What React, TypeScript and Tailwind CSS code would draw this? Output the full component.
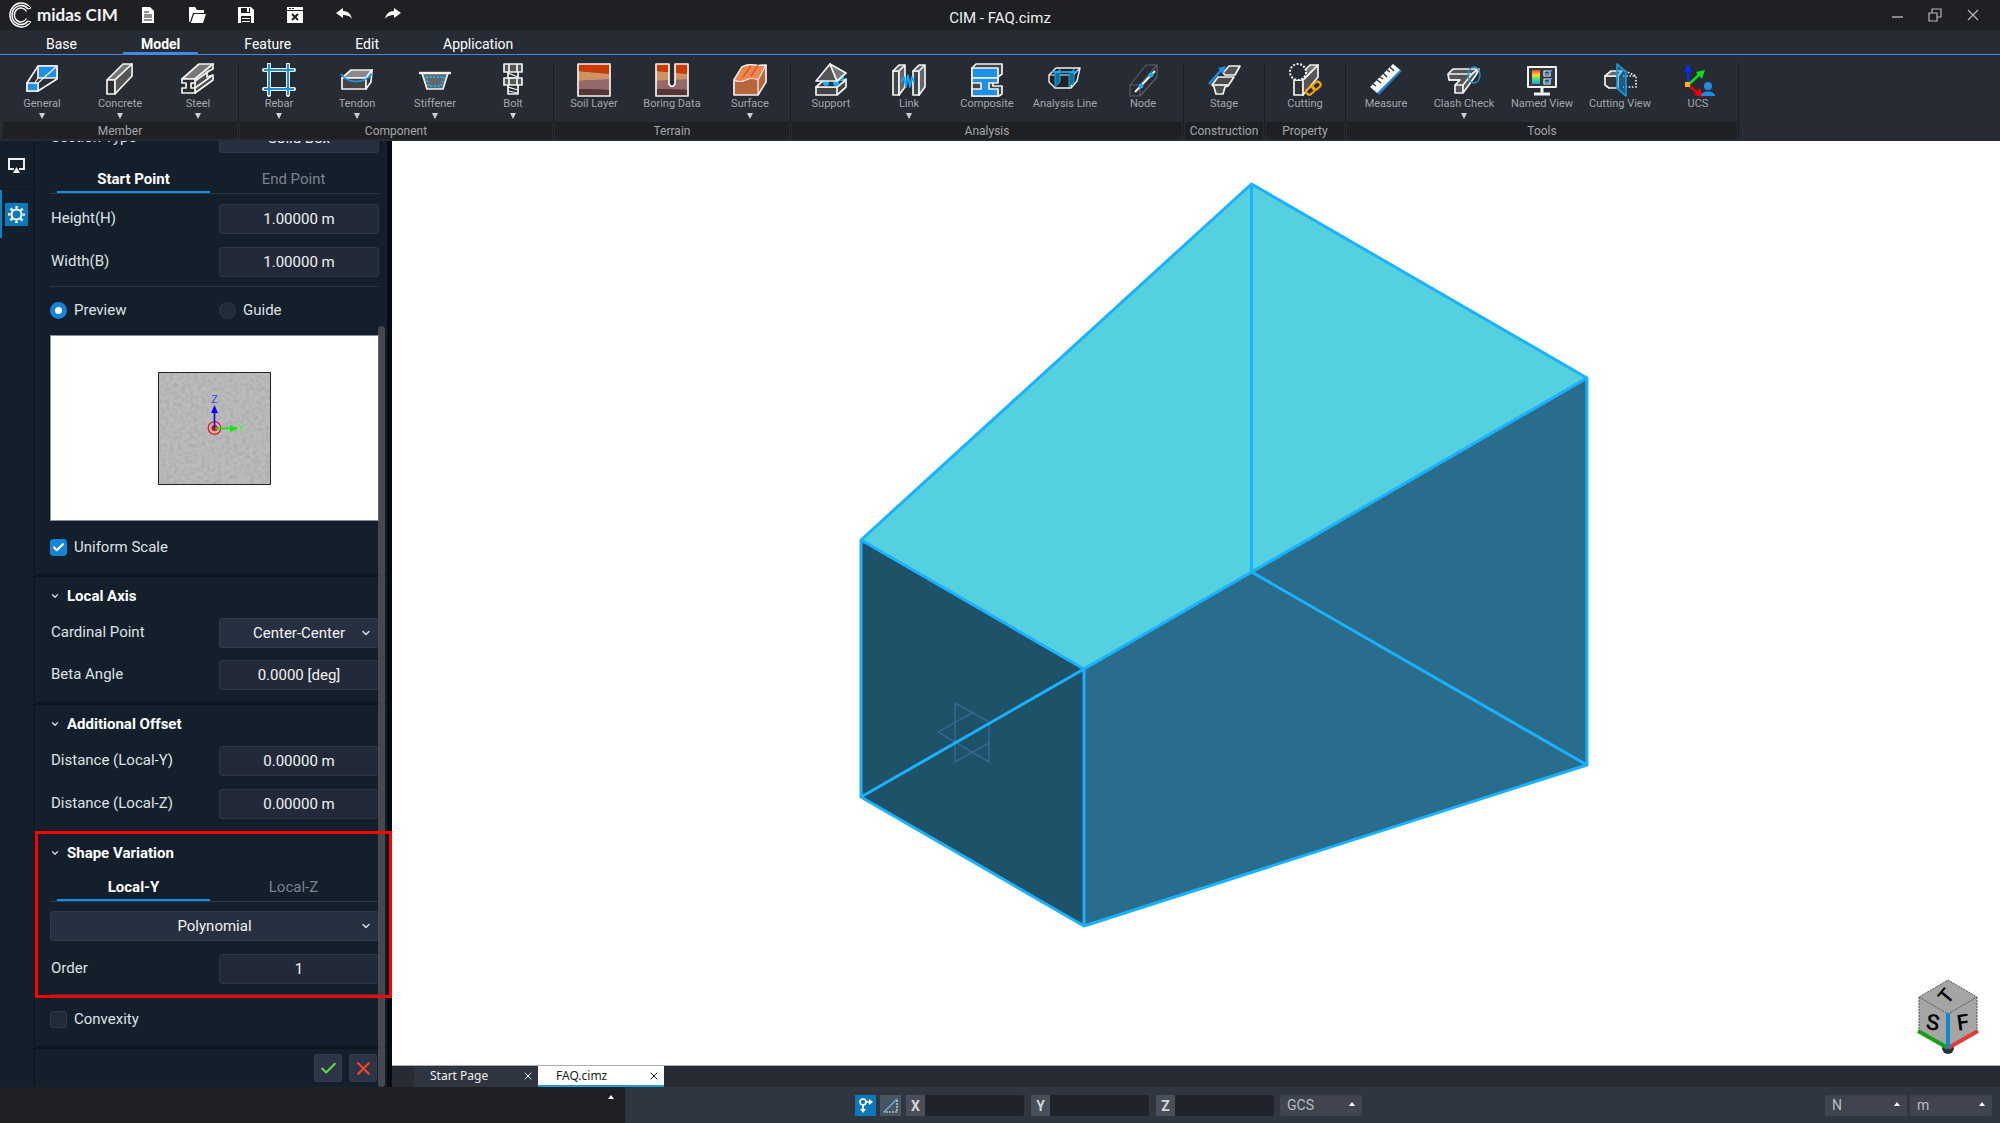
import { useState } from 'react';
import type { ReactNode } from 'react';
import { Check, ChevronDown, X } from 'lucide-react';

interface Tool {
  label: string;
  icon: ReactNode;
  menu?: boolean;
}

interface ToolGroup {
  name: string;
  tools: Tool[];
}

const MENU_TABS = ['Base', 'Model', 'Feature', 'Edit', 'Application'];

function Icon({ children }: { children: ReactNode }) {
  return (
    <svg width="34" height="34" viewBox="0 0 34 34" fill="none" stroke="#f2f2f2" strokeWidth="1.7" strokeLinejoin="round" aria-hidden="true">
      {children}
    </svg>
  );
}

const GeneralIcon = (
  <Icon>
    <path d="M2 20 13 3h19v13L13 28H2z" fill="#2b2e34" />
    <path d="M13 3h19v12H13z" fill="#1f8fe6" />
    <path d="M2 20h11v8H2z" fill="#1f8fe6" />
    <path d="M13 20 32 3M13 15l-4 6" strokeWidth="1.2" />
  </Icon>
);

const ConcreteIcon = (
  <Icon>
    <path d="M4 17 20 1h9L12 17z" fill="#777" />
    <path d="M4 17h8v14H4z" fill="#2c2c2c" />
    <path d="M12 17 29 1v12L12 31z" fill="#555" />
  </Icon>
);

const SteelIcon = (
  <Icon>
    <path d="M1 16 18 1h14L14 16z" fill="#777" />
    <path d="M14 16 32 1v5l-6 3v5l6-2v5L14 30z" fill="#4b4b4b" />
    <path d="m10 21 18-13M14 25l18-13" />
    <path d="M1 16h13v4h-4v5h4v5H1v-5h4v-5H1z" fill="#2c2c2c" />
  </Icon>
);

const RebarIcon = (
  <Icon>
    <path d="M7 1v31M26 1v31M2 7h30M2 26h30" strokeWidth="4" strokeLinecap="round" />
    <path d="M7 1v31M26 1v31M2 7h30M2 26h30" stroke="#1f8fe6" strokeWidth="2" />
  </Icon>
);

const TendonIcon = (
  <Icon>
    <path d="m2 15 9-8h21l-6 8z" fill="#8a8a8a" />
    <path d="M2 15h24v11H2z" fill="#444" />
    <path d="m32 7-1 12-5 7V15z" fill="#333" />
    <path d="M1 11c7 10 23 10 31 0" stroke="#12a5ea" />
  </Icon>
);

const StiffenerIcon = (
  <Icon>
    <path d="m4 10 5 16h16l5-16z" fill="#666" />
    <path d="M1 10h32" strokeWidth="2.4" />
    <path d="m8 14 3 9h12l3-9z" stroke="#10b4ff" strokeWidth="2" strokeDasharray="2 1.6" />
  </Icon>
);

const BoltIcon = (
  <Icon>
    <path d="M8 1h18v8H8zM8 15h18v7H8z" fill="#555" />
    <path d="M13 1v8M21 1v8M13 15v7M21 15v7M12 9v6h10V9M12 22v9h10v-9" />
    <path d="m12 10 10 4M12 24l10 3M12 28l10 2" strokeWidth="1.2" />
  </Icon>
);

function SoilLayers() {
  return (
    <g stroke="none">
      <path d="M1 1h32v10L1 8z" fill="#cc3a00" />
      <path d="M1 8l32 3v6L1 18z" fill="#cf9264" />
      <path d="M1 18l32-2v11L1 26z" fill="#95696a" />
      <path d="M1 26l32 1v6H1z" fill="#553534" />
    </g>
  );
}

const SoilLayerIcon = (
  <Icon>
    <SoilLayers />
    <path d="M1 1h32v32H1z" />
  </Icon>
);

const BoringIcon = (
  <Icon>
    <SoilLayers />
    <path d="M14 0v20q3 5 6 0V0z" fill="#272b34" stroke="none" />
    <path d="M1 1h13v20q3 5 6 0V1h13v32H1z" />
  </Icon>
);

const SurfaceIcon = (
  <Icon>
    <path d="M1 17 9 4q6-3 11-2t13 0v17l-8 13H1z" fill="#b9653b" />
    <path d="M1 17 9 4q6-3 11-2t13 0l-8 15q-6-3-12 0t-12 0" fill="#ee8450" strokeWidth="1.2" />
    <path d="M25 17v15" strokeWidth="1.2" />
    <path d="m10 14 8-11M18 13l7-11" stroke="#d4602f" />
  </Icon>
);

const SupportIcon = (
  <Icon>
    <path d="M2 24h21v8H2zM23 24l9-8v8l-9 8z" fill="#444" />
    <path d="m2 24 8-7h22l-9 7z" fill="#333" />
    <circle cx="12" cy="20" r="3" fill="#12b0ff" stroke="none" />
    <circle cx="22" cy="20" r="3" fill="#12b0ff" stroke="none" />
    <circle cx="27" cy="15" r="3" fill="#12b0ff" stroke="none" />
    <path d="M16 1 2 18h21z" fill="#555" />
    <path d="m16 1 16 9-9 8z" fill="#777" />
  </Icon>
);

const LinkIcon = (
  <Icon>
    <path d="M1 8h6v24H1z" fill="#444" />
    <path d="m1 8 6-6h6L7 8zM7 8l6-6v22l-6 8z" fill="#666" />
    <path d="M21 8h6v24h-6z" fill="#444" />
    <path d="m21 8 6-6h6l-6 6zM27 8l6-6v22l-6 8z" fill="#666" />
    <path d="m9 19 3-5 2 10 2-12 2 12 2-10 2 5" stroke="#12a5ff" />
  </Icon>
);

const CompositeIcon = (
  <Icon>
    <path d="m2 5 4-4h26v10l-4 3v3h-5v6h9v8l-3 2H2z" fill="#444" />
    <path d="M2 5h26v10H2z" fill="#1f8fe6" />
    <path d="M2 15h26v5h-9v6h9v7H2v-7h9v-6H2z" fill="#1f8fe6" />
  </Icon>
);

const AnalysisLineIcon = (
  <Icon>
    <path d="m1 12 7-7h24l-3 13-6 7H7l-6-6z" fill="#222" strokeWidth="1.4" />
    <path d="M1 12h24l7-7M25 12l-2 13" strokeWidth="1.2" />
    <path d="M7 11v13l5-5V6zM21 11v13l5-5V6z" fill="#0f6f9f" stroke="#10a5e8" strokeWidth="1" />
    <path d="M4 9h25" stroke="#10b4ff" />
  </Icon>
);

const NodeIcon = (
  <Icon>
    <path d="m4 22 16-20h11v12L14 33H4z" stroke="#5b5e64" strokeWidth="1.2" />
    <path d="M4 22h10v11M14 22 31 2" stroke="#5b5e64" strokeWidth="1.2" />
    <path d="M9 29 29 8" strokeWidth="2" />
    <circle cx="15" cy="23" r="2.4" fill="#12b0ff" stroke="none" />
    <circle cx="25" cy="12" r="2.4" fill="#12b0ff" stroke="none" />
  </Icon>
);

const StageIcon = (
  <Icon>
    <path d="m5 22 6-8h16l-6 9-3 1-2 7H9L7 24z" fill="#4b4b4b" />
    <path d="m16 10 6-7h11l-5 9H18z" fill="#555" />
    <path d="M5 22h16" />
    <path d="M2 21 16 5" stroke="#1f8fe6" strokeWidth="2.2" />
    <path d="m11 5 8-2-3 8z" fill="#1f8fe6" stroke="none" />
  </Icon>
);

const CuttingIcon = (
  <Icon>
    <path d="M6 17h9v15H6z" fill="#333" />
    <path d="m15 17 15-15v12L15 32z" fill="#555" />
    <path d="M6 17 22 2h8L15 17z" fill="#777" />
    <circle cx="10" cy="9" r="8" fill="#272b34" strokeWidth="2" strokeDasharray="2 1.6" />
    <g stroke="#f0a30a" strokeWidth="2.2">
      <rect x="18" y="25" width="9" height="6" rx="3" transform="rotate(-40 22 28)" />
      <rect x="24" y="20" width="9" height="6" rx="3" transform="rotate(-40 28 23)" />
    </g>
  </Icon>
);

const MeasureIcon = (
  <Icon>
    <path d="M24 1 33 8 10 32 8 30z" fill="#1f7fd0" stroke="none" />
    <path d="m24 1 7 6L8 30l-7-6z" fill="#f5f5f5" stroke="none" />
    <path d="m4 21 3 2M8 17l4 3M11 14l3 2M14 10l4 4M18 7l3 2M21 4l4 4" stroke="#272b34" strokeWidth="1.2" />
  </Icon>
);

const ClashIcon = (
  <Icon>
    <path d="M1 11 6 6h26l-3 6-13 18H8v-8l5-5H2z" fill="#555" />
    <path d="M1 11h24l6-5M2 17h11M8 22h8v8M16 22l9-11" />
    <ellipse cx="27" cy="12" rx="6" ry="8" stroke="#1897d6" strokeWidth="1.3" />
  </Icon>
);

const NamedViewIcon = (
  <Icon>
    <defs>
      <linearGradient id="legend" x1="0" y1="0" x2="0" y2="1">
        <stop offset="0" stopColor="#ff3b30" />
        <stop offset=".35" stopColor="#ffd93b" />
        <stop offset=".65" stopColor="#4be06b" />
        <stop offset="1" stopColor="#2196f3" />
      </linearGradient>
    </defs>
    <path d="M3 4h28v20H3z" fill="#33373e" strokeWidth="2" />
    <path d="M7 7h8v14H7z" fill="url(#legend)" stroke="none" />
    <path d="M19 8h6v5h-6zM19 16h6v5h-6z" strokeWidth="1.2" />
    <path d="m20 10 2 2 5-5M20 18l2 2 5-5" stroke="#35b4ff" strokeWidth="1.2" />
    <path d="M17 24v6M9 31h16" strokeWidth="3" />
  </Icon>
);

const CuttingViewIcon = (
  <Icon>
    <path d="M2 13h13v12H6l-4-3z" fill="#333" />
    <path d="m2 13 6-5h11l-4 5z" fill="#666" />
    <path d="m22 8 11 5v11H20M20 13h13" strokeDasharray="1.6 1.6" />
    <path d="m14 1 9 8v24l-9-8z" fill="#1897d6" fillOpacity=".45" stroke="#1897d6" />
  </Icon>
);

const UcsIcon = (
  <Icon>
    <g strokeWidth="2.4">
      <path d="M7 22V7" stroke="#0b2cff" />
      <path d="M7 22 20 10" stroke="#00e516" />
      <path d="m7 22 11 9" stroke="#f00000" />
    </g>
    <path d="m3 9 4-8 4 8z" fill="#0b2cff" stroke="none" />
    <path d="m15 9 9-2-3 9z" fill="#00e516" stroke="none" />
    <path d="m13 32 9 2-3-9z" fill="#f00000" stroke="none" />
    <path d="M4 19h5v5H4z" fill="#f7b500" stroke="none" />
    <circle cx="27" cy="23" r="4" fill="#1f8fe6" stroke="none" />
    <path d="M20 33c0-6 14-6 14 0z" fill="#1f8fe6" stroke="none" />
  </Icon>
);

const TOOL_GROUPS: ToolGroup[] = [
  {
    name: 'Member',
    tools: [
      { label: 'General', icon: GeneralIcon, menu: true },
      { label: 'Concrete', icon: ConcreteIcon, menu: true },
      { label: 'Steel', icon: SteelIcon, menu: true },
    ],
  },
  {
    name: 'Component',
    tools: [
      { label: 'Rebar', icon: RebarIcon, menu: true },
      { label: 'Tendon', icon: TendonIcon, menu: true },
      { label: 'Stiffener', icon: StiffenerIcon, menu: true },
      { label: 'Bolt', icon: BoltIcon, menu: true },
    ],
  },
  {
    name: 'Terrain',
    tools: [
      { label: 'Soil Layer', icon: SoilLayerIcon },
      { label: 'Boring Data', icon: BoringIcon },
      { label: 'Surface', icon: SurfaceIcon, menu: true },
    ],
  },
  {
    name: 'Analysis',
    tools: [
      { label: 'Support', icon: SupportIcon },
      { label: 'Link', icon: LinkIcon, menu: true },
      { label: 'Composite', icon: CompositeIcon },
      { label: 'Analysis Line', icon: AnalysisLineIcon },
      { label: 'Node', icon: NodeIcon },
    ],
  },
  { name: 'Construction', tools: [{ label: 'Stage', icon: StageIcon }] },
  { name: 'Property', tools: [{ label: 'Cutting', icon: CuttingIcon }] },
  {
    name: 'Tools',
    tools: [
      { label: 'Measure', icon: MeasureIcon },
      { label: 'Clash Check', icon: ClashIcon, menu: true },
      { label: 'Named View', icon: NamedViewIcon },
      { label: 'Cutting View', icon: CuttingViewIcon },
      { label: 'UCS', icon: UcsIcon },
    ],
  },
];

const QUICK_ACTIONS: { label: string; icon: ReactNode }[] = [
  {
    label: 'New',
    icon: (
      <>
        <path d="M3 1h8l4 4v12H3z" fill="#fff" />
        <path d="M5 6h5M5 9h8M5 11h8M5 14h8" stroke="#1f2024" strokeWidth="1.2" />
      </>
    ),
  },
  {
    label: 'Open',
    icon: (
      <>
        <path d="M1 1h6l2 3h7v3H5L2 16H1z" fill="#fff" />
        <path d="M6 8h12l-3 9H3z" fill="#fff" />
      </>
    ),
  },
  {
    label: 'Save',
    icon: (
      <>
        <path d="M1 1h13l3 3v13H1z" fill="#fff" />
        <path d="M4 2h9v5H4zM4 10h10v7H4z" fill="#1f2024" />
        <path d="M10 2h2v4h-2zM5 12h8v1H5zM5 15h8v1H5z" fill="#fff" />
      </>
    ),
  },
  {
    label: 'Close',
    icon: (
      <>
        <path d="M1 1h16v3H1zM1 5h16v12H1z" fill="#fff" />
        <path d="M3 2h2v1H3zM6 2h2v1H6z" fill="#1f2024" />
        <path d="m6 8 6 6M12 8l-6 6" stroke="#1f2024" strokeWidth="2" />
      </>
    ),
  },
  { label: 'Undo', icon: <path d="m1 7 7-5v3c6 0 8 4 9 8-2-3-5-4-9-4v3z" fill="#fff" /> },
  { label: 'Redo', icon: <path d="m17 7-7-5v3c-6 0-8 4-9 8 2-3 5-4 9-4v3z" fill="#fff" /> },
];

function TitleBar() {
  return (
    <header className="grid h-[30px] shrink-0 grid-cols-[1fr_auto_1fr] items-center bg-[#1f2024]">
      <div className="flex items-center pl-2">
        <svg width="25" height="26" viewBox="0 0 25 26" fill="none" stroke="#fff" strokeWidth="1.4" aria-hidden="true">
          <path d="M21 4a11.500 12 0 1 0 0 18" />
          <path d="M20 7a9 9.500 0 1 0 0 12" />
          <path d="M18.500 9.500a6.500 7 0 1 0 0 7" />
          <path d="m21 4 2 2-3 1M21 22l2-2-3-1" strokeWidth="1" />
        </svg>
        <span className="ml-1 w-[81px] whitespace-nowrap font-['Lato'] text-[17px] font-bold leading-6 text-[#f4f4f4]">midas CIM</span>
        <div className="ml-[21px] flex gap-[31px]">
          {QUICK_ACTIONS.map((action) => (
            <button key={action.label} type="button" aria-label={action.label}>
              <svg width="18" height="18" viewBox="0 0 18 18" fill="none" aria-hidden="true">
                {action.icon}
              </svg>
            </button>
          ))}
        </div>
      </div>
      <h1 className="pt-[5px] text-[15px] leading-5 text-[#f0f0f0]">CIM - FAQ.cimz</h1>
      <div className="flex items-center justify-end gap-6 pr-5 text-[#b4b6ba]">
        <button type="button" aria-label="Minimize">
          <svg width="14" height="14" viewBox="0 0 14 14" stroke="currentColor" strokeWidth="1.4"><path d="M2 9h11" /></svg>
        </button>
        <button type="button" aria-label="Restore">
          <svg width="14" height="14" viewBox="0 0 14 14" fill="none" stroke="currentColor" strokeWidth="1.2"><path d="M1 5h8v8H1zM4 5V1h9v8H9" /></svg>
        </button>
        <button type="button" aria-label="Close window">
          <svg width="14" height="14" viewBox="0 0 14 14" stroke="currentColor" strokeWidth="1.2"><path d="m2 2 10 10M12 2 2 12" /></svg>
        </button>
      </div>
    </header>
  );
}

function Ribbon() {
  const [activeTab, setActiveTab] = useState('Model');

  return (
    <div className="shrink-0 bg-[#272b34]">
      <nav className="flex h-[25px] gap-7 border-b border-[#3a8bec] pl-7">
        {MENU_TABS.map((tab) => (
          <button
            key={tab}
            type="button"
            onClick={() => setActiveTab(tab)}
            className={`border-b-2 px-[18px] pt-1 text-sm leading-5 text-white ${
              tab === activeTab ? 'border-[#3a8bec] font-bold' : 'border-transparent'
            }`}
          >
            {tab}
          </button>
        ))}
      </nav>
      <div className="flex h-[86px] pl-[3px]">
        {TOOL_GROUPS.map((group) => (
          <section key={group.name} className="flex">
            <div className="flex flex-col">
              <div className="flex h-[67px]">
                {group.tools.map((tool) => (
                  <button key={tool.label} type="button" className="flex w-[78px] flex-col items-center pt-2 text-[#a3a6ac]">
                    {tool.icon}
                    <span className="whitespace-nowrap text-[11px] leading-[14px]">{tool.label}</span>
                    {tool.menu && (
                      <svg width="6" height="6" viewBox="0 0 6 6" className="mt-0.5" fill="#d0d0d0" aria-hidden="true">
                        <path d="M0 0h6L3 6z" />
                      </svg>
                    )}
                  </button>
                ))}
              </div>
              <h2 className="h-[17px] bg-[#1f2024] text-center text-xs leading-[18px] text-[#a3a6ac]">{group.name}</h2>
            </div>
            <div className="mx-px mt-2 mb-1 w-px bg-[#1b1d22]" />
          </section>
        ))}
      </div>
    </div>
  );
}

function Tabs({ tabs }: { tabs: string[] }) {
  const [active, setActive] = useState(tabs[0]);
  return (
    <div className="grid h-8 grid-cols-[153px_1fr] border-b border-[#2b3848] pr-0.5 pl-[7px]" role="tablist">
      {tabs.map((tab) => (
        <button
          key={tab}
          type="button"
          role="tab"
          aria-selected={tab === active}
          onClick={() => setActive(tab)}
          className={`border-b-2 pt-1 text-[15px] leading-5 ${
            tab === active ? 'border-[#1190f0] font-bold text-white' : 'border-transparent text-[#7b838c]'
          }`}
        >
          {tab}
        </button>
      ))}
    </div>
  );
}

function Field({ id, label, value }: { id: string; label: string; value: string }) {
  return (
    <div className="flex h-[30px] justify-between">
      <label htmlFor={id} className="pl-px text-[15px] leading-7 text-[#dfe2e5]">{label}</label>
      <input
        id={id}
        defaultValue={value}
        className="h-[30px] w-40 rounded-[3px] border border-[#2c3748] bg-[#222a39] text-center text-[15px] text-[#f2f2f2]"
      />
    </div>
  );
}

function SelectBox({ id, value, options, className }: { id: string; value: string; options: string[]; className: string }) {
  return (
    <div className={`relative ${className}`}>
      <select
        id={id}
        defaultValue={value}
        aria-label={value}
        className="h-[30px] w-full appearance-none rounded-[3px] border border-[#2f3a4a] bg-[#273040] text-center text-[15px] text-[#f2f2f2] [text-align-last:center]"
      >
        {options.map((option) => (
          <option key={option}>{option}</option>
        ))}
      </select>
      <ChevronDown size={12} strokeWidth={3} className="pointer-events-none absolute top-[9px] right-[7px] text-[#d5d8dc]" />
    </div>
  );
}

function RadioOption({ label, checked, onChange }: { label: string; checked: boolean; onChange: () => void }) {
  return (
    <label className="flex items-center gap-[7px] text-[15px] leading-[18px] text-[#dfe2e5]">
      <input
        type="radio"
        name="section-view"
        checked={checked}
        onChange={onChange}
        className="size-[17px] appearance-none rounded-full border border-[#2f3949] bg-[#222b39] checked:border-[5px] checked:border-[#1583d8] checked:bg-white"
      />
      {label}
    </label>
  );
}

function CheckOption({ label, defaultChecked }: { label: string; defaultChecked?: boolean }) {
  return (
    <label className="relative flex w-fit items-center gap-[7px] text-[15px] leading-[18px] text-[#dfe2e5]">
      <input
        type="checkbox"
        defaultChecked={defaultChecked}
        className="peer size-[17px] appearance-none rounded-[3px] border border-[#2f3949] bg-[#222b39] checked:border-[#1583d8] checked:bg-[#1583d8]"
      />
      <Check size={13} strokeWidth={4} className="pointer-events-none absolute left-[2px] hidden text-white peer-checked:block" />
      {label}
    </label>
  );
}

function SectionHeader({ title }: { title: string }) {
  return (
    <button type="button" className="mt-[9px] flex h-5 items-center gap-[7px] text-[15px] font-bold leading-5 text-white">
      <ChevronDown size={10} strokeWidth={3} className="text-[#d5d8dc]" />
      {title}
    </button>
  );
}

function Divider() {
  return <div className="-mr-[13px] -ml-[15px] h-[3px] shrink-0 bg-[#0c141e]" />;
}

function SectionPreview() {
  return (
    <div className="mt-4 flex h-[186px] shrink-0 items-center justify-center border border-[#8b8f94] bg-white">
      <svg width="113" height="113" viewBox="0 0 113 113" aria-hidden="true">
        <filter id="grain">
          <feTurbulence type="fractalNoise" baseFrequency=".25" numOctaves="3" seed="4" />
          <feColorMatrix values="0 0 0 0 .3  0 0 0 0 .3  0 0 0 0 .3  .9 0 0 0 -.32" />
        </filter>
        <path d="M0 0h113v113H0z" fill="#bcbcbc" />
        <path d="M0 0h113v113H0z" filter="url(#grain)" />
        <path d="M.5.5h112v112H.5z" fill="none" stroke="#222" />
        <circle cx="56.500" cy="56" r="6.300" fill="none" stroke="#f01818" strokeWidth="1.2" />
        <circle cx="56.500" cy="56" r="3" fill="#f00000" />
        <path d="M56.500 56V38" stroke="#0a0af0" strokeWidth="1.6" />
        <path d="m53 41 3.500-8 3.500 8z" fill="#0a0af0" />
        <path d="M57 56.500h18" stroke="#0bea0b" strokeWidth="1.6" />
        <path d="m72 53 8 3.500-8 3.500z" fill="#0bea0b" />
        <text x="56.500" y="31" textAnchor="middle" fontSize="11" fill="#3a3af5">Z</text>
        <text x="80" y="60" fontSize="10" fill="#3cf03c">Y</text>
      </svg>
    </div>
  );
}

function PropertiesPanel() {
  const [view, setView] = useState<'preview' | 'guide'>('preview');

  return (
    <aside className="relative flex w-[392px] shrink-0 bg-[#141f2c]">
      <div className="flex w-[35px] flex-col border-r-2 border-[#0f1823]">
        <button type="button" aria-label="Display" className="flex h-[49px] items-center justify-center border-b border-[#101923]">
          <svg width="17" height="16" viewBox="0 0 17 16" fill="none" aria-hidden="true">
            <path d="M6 12H1V2h15v10h-5" stroke="#eee" strokeWidth="2" />
            <path d="m5 16 3.500-6 3.500 6z" fill="#eee" />
          </svg>
        </button>
        <button type="button" aria-label="Properties" className="flex h-12 items-center border-l-2 border-[#0c84c6] pl-[3px]">
          <span className="flex size-[23px] items-center justify-center bg-[#0c7ab8]">
            <svg width="19" height="19" viewBox="0 0 19 19" fill="none" stroke="#fff" aria-hidden="true">
              <circle cx="9.500" cy="9.500" r="5" strokeWidth="2" />
              <circle cx="9.500" cy="9.500" r="7.200" strokeWidth="2.600" strokeDasharray="2.400 3.250" strokeDashoffset="1.200" />
            </svg>
          </span>
        </button>
      </div>

      {/* content is kept scrolled to the bottom */}
      <div className="flex min-w-0 flex-1 flex-col justify-end overflow-hidden pr-[13px] pl-[15px]">
        <div className="flex h-[30px] shrink-0 justify-between">
          <label htmlFor="section-type" className="pl-px text-[15px] leading-7 text-[#dfe2e5]">Section Type</label>
          <button id="section-type" type="button" className="h-[30px] w-40 rounded-[3px] border border-[#2f3a4a] bg-[#273040] text-[15px] text-[#f2f2f2]">
            Solid Box
          </button>
        </div>
        <div className="mt-[9px]">
          <Tabs tabs={['Start Point', 'End Point']} />
        </div>
        <div className="mt-[10px] flex flex-col gap-[13px]">
          <Field id="height" label="Height(H)" value="1.00000 m" />
          <Field id="width" label="Width(B)" value="1.00000 m" />
        </div>
        <div className="mt-[9px] h-px shrink-0 bg-[#2b3644]" />
        <div className="mt-[14px] grid h-[18px] shrink-0 grid-cols-[169px_1fr]">
          <RadioOption label="Preview" checked={view === 'preview'} onChange={() => setView('preview')} />
          <RadioOption label="Guide" checked={view === 'guide'} onChange={() => setView('guide')} />
        </div>
        <SectionPreview />
        <div className="mt-[17px] mb-[19px] h-[17px] shrink-0">
          <CheckOption label="Uniform Scale" defaultChecked />
        </div>

        <Divider />
        <SectionHeader title="Local Axis" />
        <div className="mt-3 mb-3 flex flex-col gap-3">
          <div className="flex h-[30px] justify-between">
            <label htmlFor="cardinal" className="pl-px text-[15px] leading-7 text-[#dfe2e5]">Cardinal Point</label>
            <SelectBox id="cardinal" value="Center-Center" options={['Center-Center', 'Top-Left', 'Bottom-Right']} className="w-40" />
          </div>
          <Field id="beta" label="Beta Angle" value="0.0000 [deg]" />
        </div>

        <Divider />
        <SectionHeader title="Additional Offset" />
        <div className="mt-3 mb-3 flex flex-col gap-[13px]">
          <Field id="offset-y" label="Distance (Local-Y)" value="0.00000 m" />
          <Field id="offset-z" label="Distance (Local-Z)" value="0.00000 m" />
        </div>

        <Divider />
        <SectionHeader title="Shape Variation" />
        <div className="mt-[7px]">
          <Tabs tabs={['Local-Y', 'Local-Z']} />
        </div>
        <div className="mt-[9px] mb-[10px] flex flex-col gap-[13px]">
          <SelectBox id="variation" value="Polynomial" options={['Polynomial', 'Linear']} className="w-full" />
          <Field id="order" label="Order" value="1" />
        </div>
        <div className="h-px shrink-0 bg-[#2b3644]" />
        <div className="mt-[15px] mb-[18px] h-[18px] shrink-0">
          <CheckOption label="Convexity" />
        </div>

        <Divider />
        <div className="flex h-[38px] shrink-0 items-center justify-end gap-[7px] pr-[2px]">
          <button type="button" aria-label="Apply" className="flex size-7 items-center justify-center rounded-[3px] border border-[#323e50] bg-[#2b3546]">
            <Check size={19} strokeWidth={2.5} className="text-[#5fdc3f]" />
          </button>
          <button type="button" aria-label="Cancel" className="flex size-7 items-center justify-center rounded-[3px] border border-[#323e50] bg-[#2b3546]">
            <X size={21} strokeWidth={2.5} className="text-[#f8432a]" />
          </button>
        </div>
      </div>

      <div className="pointer-events-none absolute top-[185px] right-[7px] bottom-0 w-[7px] rounded bg-[#55575b]/75" />
      <div className="pointer-events-none absolute inset-y-0 right-0 w-[5px] bg-[#070c14]" />
      <div className="pointer-events-none absolute right-0 bottom-[89px] left-[35px] h-[167px] border-3 border-[#ff0000]" />
    </aside>
  );
}

function ModelView() {
  return (
    <div className="relative min-h-0 flex-1 border-b border-[#a9adb2] bg-white">
      <svg viewBox="0 0 1608 924" className="size-full" fill="none" role="img" aria-label="Tapered solid box">
        <path d="M859.500 43 1195 237 692 528 469 399z" fill="#55d0de" />
        <path d="m692 528 503-291v387L692 785z" fill="#2a6c8c" />
        <path d="m469 399 223 129v257L469 656z" fill="#1d5268" />
        <path d="m563 562 34 19v40l-51-30 34-19M563 562v59l34-19" stroke="#38689a" strokeWidth="1.600" opacity=".85" />
        <circle cx="579" cy="592" r="2" fill="#3b2636" />
        <g stroke="#1ab2ff" strokeWidth="3" strokeLinejoin="round">
          <path d="M859.500 43 1195 237v387L692 785 469 656V399z" />
          <path d="m469 399 223 129v257M469 656l223-128 503-291" />
          <path d="M859.500 43v388l335.500 193" />
        </g>
      </svg>
      <svg width="64" height="78" viewBox="0 0 64 78" className="absolute right-[20px] bottom-[11px]" role="img" aria-label="View cube">
        <circle cx="32" cy="72" r="6" fill="#263040" />
        <path d="m32 4 29 17v34L32 72 3 55V21z" fill="#a5a5a5" />
        <path d="m3 21 29 17 29-17L32 4zM3 21v34M61 21v34" fill="none" stroke="#555" strokeDasharray="2 1" />
        <path d="m2 55 30 17" stroke="#16a016" strokeWidth="4" />
        <path d="m62 55-30 17" stroke="#e03a3a" strokeWidth="4" />
        <path d="M32 37v35" stroke="#0d8bc8" strokeWidth="4" />
        <g fontSize="22" fontWeight="500" textAnchor="middle">
          <text transform="translate(17 46) rotate(8)" y="8">S</text>
          <text transform="translate(47 46) rotate(-8)" y="8">F</text>
          <text transform="translate(30 20) rotate(-50)" fontSize="20" y="7">T</text>
        </g>
      </svg>
    </div>
  );
}

function DocumentTabs() {
  return (
    <div className="flex h-[21px] shrink-0 bg-[#272b34] pl-[22px] font-['Noto_Sans'] text-xs leading-5">
      <div className="flex w-[124px] items-start justify-between bg-[#2f3540] pr-1 pl-4 text-[#f0f0f0]">
        <button type="button">Start Page</button>
        <button type="button" aria-label="Close Start Page" className="pt-1"><X size={12} /></button>
      </div>
      <div className="flex w-[126px] items-start justify-between border-b-2 border-[#2499d8] bg-white pr-1 pl-[18px] text-[#1c1c1c]">
        <button type="button">FAQ.cimz</button>
        <button type="button" aria-label="Close FAQ.cimz" className="pt-1"><X size={12} /></button>
      </div>
    </div>
  );
}

function UnitSelect({ label, value }: { label: string; value: string }) {
  return (
    <div className="relative">
      <select aria-label={label} defaultValue={value} className="h-[21px] w-[82px] appearance-none rounded-[2px] bg-[#40444f] pl-[7px] text-sm leading-5 text-[#b9bdc5]">
        <option>{value}</option>
      </select>
      <svg width="6" height="4" viewBox="0 0 6 4" fill="#fff" className="pointer-events-none absolute top-[9px] right-[7px]" aria-hidden="true">
        <path d="M0 4h6L3 0z" />
      </svg>
    </div>
  );
}

function StatusBar() {
  return (
    <footer className="flex h-9 shrink-0 bg-[#30363f]">
      <div className="flex w-[625px] justify-end bg-[#1f2024] pt-2 pr-[11px]">
        <svg width="6" height="4" viewBox="0 0 6 4" fill="#fff" aria-hidden="true"><path d="M0 4h6L3 0z" /></svg>
      </div>
      <div className="flex flex-1 items-center pr-2 pl-[230px]">
        <button type="button" aria-label="Snap" className="flex size-[21px] items-center justify-center bg-[#0c7ab8]">
          <svg width="17" height="17" viewBox="0 0 17 17" fill="none" stroke="#fff" strokeWidth="1.700" aria-hidden="true">
            <circle cx="6" cy="5" r="3" />
            <path d="M9 5h5M6 8v6" />
            <path d="m12 2 4 3-4 3zM3 12l3 4 3-4z" fill="#fff" stroke="none" />
          </svg>
        </button>
        <button type="button" aria-label="Angle" className="mr-[5px] ml-1 flex size-[21px] items-center justify-center bg-[#465660]">
          <svg width="17" height="17" viewBox="0 0 17 17" fill="none" aria-hidden="true">
            <path d="M2 15 15 2" stroke="#6f9fe0" strokeWidth="1.600" />
            <path d="M15 3v12H2" stroke="#e5e5e5" strokeWidth="1.200" strokeDasharray="2 1" />
          </svg>
        </button>
        <div className="mr-[6px] flex gap-[7px]">
          {['X', 'Y', 'Z'].map((axis) => (
            <div key={axis} className="flex h-[21px] w-[118px]">
              <label htmlFor={`axis-${axis}`} className="w-[19px] bg-[#4a4e59] text-center text-sm font-bold leading-[22px] text-[#d4d6da]">{axis}</label>
              <input id={`axis-${axis}`} className="min-w-0 flex-1 rounded-r-[2px] bg-[#1f232b] px-1 text-sm text-white" />
            </div>
          ))}
        </div>
        <UnitSelect label="Coordinate system" value="GCS" />
        <div className="ml-auto flex gap-[3px]">
          <UnitSelect label="Force unit" value="N" />
          <UnitSelect label="Length unit" value="m" />
        </div>
      </div>
    </footer>
  );
}

export default function App() {
  return (
    <div className="flex h-screen flex-col overflow-hidden bg-[#272b34] font-['Roboto','Liberation_Sans',sans-serif]">
      <TitleBar />
      <Ribbon />
      <div className="flex min-h-0 flex-1">
        <PropertiesPanel />
        <main className="flex min-w-0 flex-1 flex-col">
          <ModelView />
          <DocumentTabs />
        </main>
      </div>
      <StatusBar />
    </div>
  );
}
